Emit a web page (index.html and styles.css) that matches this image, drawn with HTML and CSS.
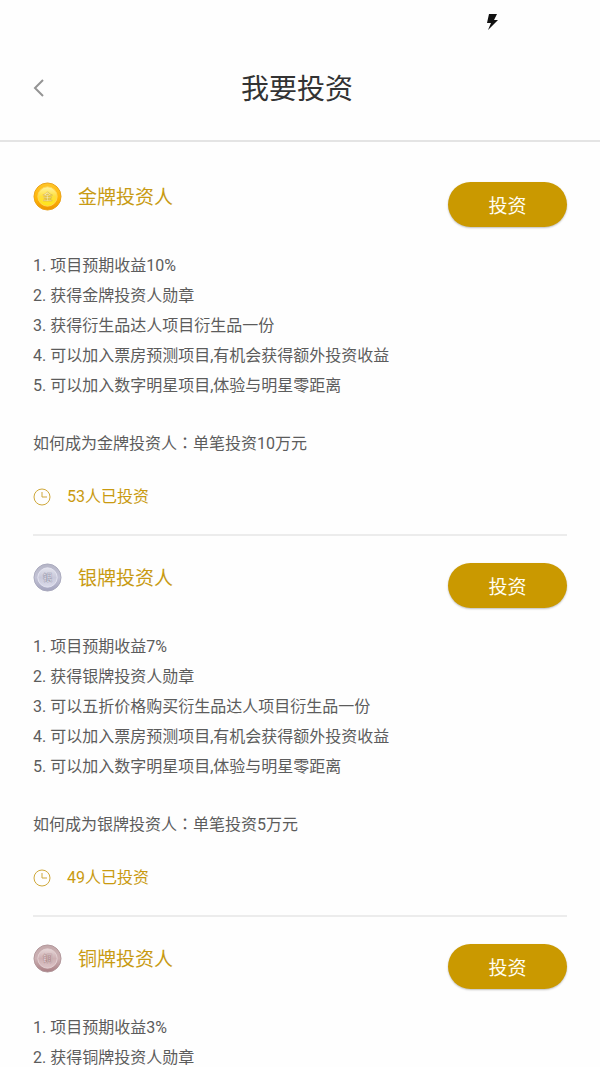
FILE: index.html
```html
<!DOCTYPE html>
<html lang="zh-CN">
<head>
    <meta charset="UTF-8">
    <meta name="viewport" content="width=device-width, initial-scale=1.0">
    <title>我要投资</title>
    <link rel="stylesheet" href="styles.css">
</head>
<body>
    <div class="status-bar">
        <svg class="bolt" viewBox="0 0 12 18" aria-hidden="true">
            <path d="M3 1h8L8 7h4L2 17l3-7H1z"/>
        </svg>
    </div>

    <header class="header">
        <button class="back" type="button" aria-label="返回">
            <svg viewBox="0 0 12 18" aria-hidden="true">
                <path d="M10 1L2 9l8 8"/>
            </svg>
        </button>
        <h1 class="title">我要投资</h1>
    </header>

    <main class="content">
        <section class="plan">
            <div class="plan-head">
                <svg class="medal" viewBox="0 0 30 30" aria-hidden="true">
                    <defs>
                        <linearGradient id="gold-rim" x1="0" y1="0" x2="0" y2="1">
                            <stop offset="0" stop-color="#ffc629"/>
                            <stop offset="0.6" stop-color="#ffb405"/>
                            <stop offset="1" stop-color="#ee9400"/>
                        </linearGradient>
                        <linearGradient id="gold-face" x1="0" y1="0" x2="0" y2="1">
                            <stop offset="0" stop-color="#fff3a0"/>
                            <stop offset="0.5" stop-color="#ffdf3c"/>
                            <stop offset="1" stop-color="#ffe816"/>
                        </linearGradient>
                    </defs>
                    <circle cx="15" cy="15" r="14" fill="url(#gold-rim)" stroke="#e8a21c"/>
                    <circle cx="15" cy="15" r="10" fill="url(#gold-face)" stroke="#ffd75a"/>
                    <text class="medal-text" x="15" y="19" fill="#fff6c4" stroke="#d9b43a">金</text>
                </svg>
                <h2 class="plan-name">金牌投资人</h2>
                <button class="invest" type="button">投资</button>
            </div>
            <ol class="benefits">
                <li>1. 项目预期收益10%</li>
                <li>2. 获得金牌投资人勋章</li>
                <li>3. 获得衍生品达人项目衍生品一份</li>
                <li>4. 可以加入票房预测项目,有机会获得额外投资收益</li>
                <li>5. 可以加入数字明星项目,体验与明星零距离</li>
            </ol>
            <p class="how">如何成为金牌投资人<span class="colon" lang="zh-TW">：</span>单笔投资10万元</p>
            <p class="count">
                <svg class="clock" viewBox="0 0 18 18" aria-hidden="true">
                    <circle cx="9" cy="9" r="8"/>
                    <path d="M9 4v5h5"/>
                </svg>
                <span>53人已投资</span>
            </p>
        </section>

        <section class="plan">
            <div class="plan-head">
                <svg class="medal" viewBox="0 0 30 30" aria-hidden="true">
                    <defs>
                        <linearGradient id="silver-rim" x1="0" y1="0" x2="0" y2="1">
                            <stop offset="0" stop-color="#b5b5c6"/>
                            <stop offset="0.5" stop-color="#c3c3d6"/>
                            <stop offset="1" stop-color="#a3a3bd"/>
                        </linearGradient>
                        <linearGradient id="silver-face" x1="0" y1="0" x2="0" y2="1">
                            <stop offset="0" stop-color="#e2e2ec"/>
                            <stop offset="0.5" stop-color="#c9c9da"/>
                            <stop offset="1" stop-color="#dadaea"/>
                        </linearGradient>
                    </defs>
                    <circle cx="15" cy="15" r="14" fill="url(#silver-rim)" stroke="#a9a9bd"/>
                    <circle cx="15" cy="15" r="10" fill="url(#silver-face)" stroke="#e4e4f0"/>
                    <text class="medal-text" x="15" y="19" fill="#f2f2f8" stroke="#9c9cb0">银</text>
                </svg>
                <h2 class="plan-name">银牌投资人</h2>
                <button class="invest" type="button">投资</button>
            </div>
            <ol class="benefits">
                <li>1. 项目预期收益7%</li>
                <li>2. 获得银牌投资人勋章</li>
                <li>3. 可以五折价格购买衍生品达人项目衍生品一份</li>
                <li>4. 可以加入票房预测项目,有机会获得额外投资收益</li>
                <li>5. 可以加入数字明星项目,体验与明星零距离</li>
            </ol>
            <p class="how">如何成为银牌投资人<span class="colon" lang="zh-TW">：</span>单笔投资5万元</p>
            <p class="count">
                <svg class="clock" viewBox="0 0 18 18" aria-hidden="true">
                    <circle cx="9" cy="9" r="8"/>
                    <path d="M9 4v5h5"/>
                </svg>
                <span>49人已投资</span>
            </p>
        </section>

        <section class="plan">
            <div class="plan-head">
                <svg class="medal" viewBox="0 0 30 30" aria-hidden="true">
                    <defs>
                        <linearGradient id="bronze-rim" x1="0" y1="0" x2="0" y2="1">
                            <stop offset="0" stop-color="#c3a9ab"/>
                            <stop offset="0.5" stop-color="#cdb1b4"/>
                            <stop offset="1" stop-color="#a97f84"/>
                        </linearGradient>
                        <linearGradient id="bronze-face" x1="0" y1="0" x2="0" y2="1">
                            <stop offset="0" stop-color="#e6d6d7"/>
                            <stop offset="0.5" stop-color="#cdb0b3"/>
                            <stop offset="1" stop-color="#dcc3c6"/>
                        </linearGradient>
                    </defs>
                    <circle cx="15" cy="15" r="14" fill="url(#bronze-rim)" stroke="#b1969a"/>
                    <circle cx="15" cy="15" r="10" fill="url(#bronze-face)" stroke="#e3d0d2"/>
                    <text class="medal-text" x="15" y="19" fill="#f6eeee" stroke="#b08c90">铜</text>
                </svg>
                <h2 class="plan-name">铜牌投资人</h2>
                <button class="invest" type="button">投资</button>
            </div>
            <ol class="benefits">
                <li>1. 项目预期收益3%</li>
                <li>2. 获得铜牌投资人勋章</li>
            </ol>
        </section>
    </main>
</body>
</html>
```

FILE: styles.css
```css
* {
    box-sizing: border-box;
}

body {
    display: flex;
    flex-direction: column;
    height: 100vh;
    margin: 0;
    background-color: #fefefe;
    color: #5c5c5c;
    font-family: Roboto, "Noto Sans CJK SC", sans-serif;
    font-size: 16px;
    line-height: 30px;
    overflow: hidden;
}

h1, h2, p, ol {
    margin: 0;
    padding: 0;
    font-weight: 400;
}

.status-bar {
    display: flex;
    flex-shrink: 0;
    justify-content: flex-end;
    height: 36px;
    padding: 13px 102px 0 0;
}

.bolt {
    width: 12px;
    height: 18px;
    fill: #111;
}

.header {
    display: grid;
    grid-template-columns: 80px 1fr 86px;
    flex-shrink: 0;
    align-items: center;
    height: 106px;
    border-bottom: 2px solid #e4e4e4;
}

.back {
    display: flex;
    align-items: center;
    height: 48px;
    padding: 0 0 0 33px;
    border: none;
    background: none;
    cursor: pointer;
}

.back svg {
    width: 12px;
    height: 18px;
    fill: none;
    stroke: #949494;
    stroke-width: 2;
}

.title {
    padding-top: 3px;
    color: #333;
    font-size: 28px;
    line-height: 40px;
    text-align: center;
}

/* Scrolling list of plans */
.content {
    flex: 1;
    min-height: 0;
    padding: 13px 33px 0;
    overflow-y: auto;
    scrollbar-width: none;
}

.plan {
    padding: 27px 0 22px;
    border-bottom: 2px solid #ececec;
}

.plan-head {
    display: flex;
    align-items: flex-start;
}

.medal {
    width: 29px;
    height: 29px;
}

.medal-text {
    font-size: 10px;
    font-weight: 700;
    stroke-width: 0.5px;
    text-anchor: middle;
}

.plan-name {
    flex: 1;
    margin-left: 16px;
    color: #c89b14;
    font-size: 19px;
    line-height: 32px;
}

.invest {
    width: 119px;
    height: 45px;
    padding: 0;
    border: none;
    border-radius: 23px;
    background-color: #ca9900;
    box-shadow: 0 1px 2px rgba(0, 0, 0, 0.25);
    color: #fffdf0;
    font-family: inherit;
    font-size: 19px;
    cursor: pointer;
}

.benefits {
    margin-top: 24px;
    list-style: none;
}

.how {
    margin-top: 28px;
}

/* the TC face centres the full-width colon */
.colon {
    font-family: "Noto Sans CJK TC", sans-serif;
    line-height: 1;
}

.count {
    display: flex;
    align-items: center;
    gap: 16px;
    margin-top: 23px;
    color: #c99a10;
}

.clock {
    width: 18px;
    height: 18px;
    fill: none;
    stroke: #cfa83a;
    stroke-width: 1;
}
```
